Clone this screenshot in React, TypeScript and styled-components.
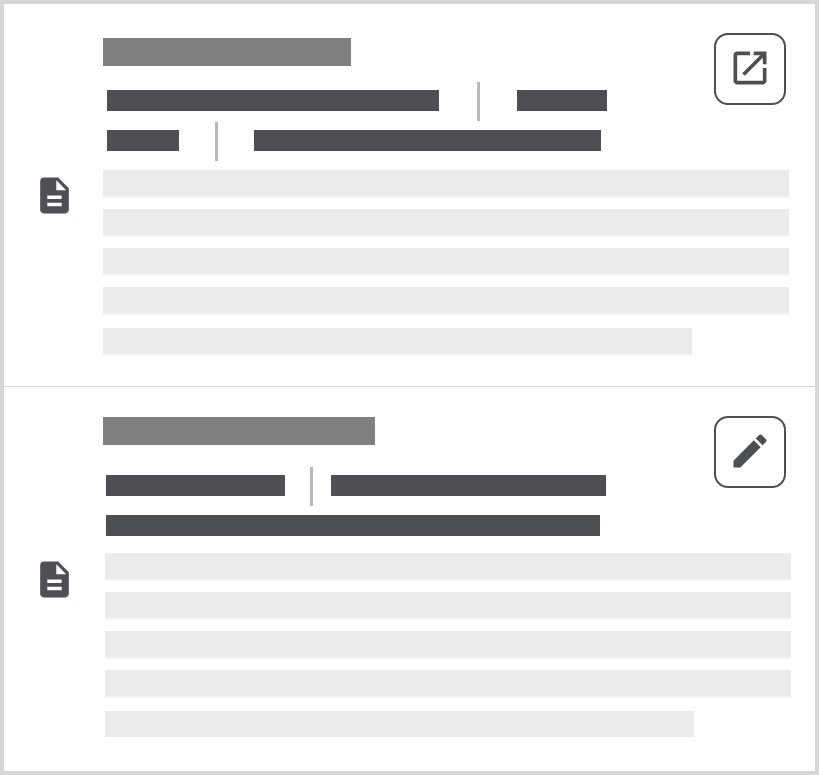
import React from "react";
import styled, { createGlobalStyle } from "styled-components";

const ink = "#4e4f53";
const edge = "#d7d7d7";

const GlobalStyle = createGlobalStyle`
  *, *::before, *::after { box-sizing: border-box; }
  body {
    margin: 0;
    background: #fff;
    font-family: "Liberation Sans", Arial, sans-serif;
  }
`;

const List = styled.main`
  display: grid;
  grid-template-rows: auto 1fr;
  min-height: 100vh;
  border: 4px solid ${edge};
  background: #fff;
`;

const Card = styled.article`
  display: grid;
  grid-template-columns: 43px minmax(0, 1fr);
  column-gap: 27px;
  padding: 0 24px 0 29px;

  & + & {
    border-top: 1px solid ${edge};
  }
`;

const Marker = styled.div`
  display: flex;
  align-items: center;
  color: ${ink};
`;

const Body = styled.div`
  padding: 29px 0 30px;
`;

const Header = styled.header`
  display: flex;
  align-items: flex-start;
  justify-content: space-between;
  gap: 16px;
  padding-right: 5px;
`;

const Summary = styled.div<{ $top: number }>`
  flex: 1;
  min-width: 0;
  padding-top: ${(p) => p.$top}px;
`;

const TitleBar = styled.div<{ $width: number }>`
  width: ${(p) => p.$width}px;
  max-width: 100%;
  height: 28px;
  background: #808080;
`;

const Meta = styled.div<{ $top: number; $indent: number }>`
  padding: ${(p) => p.$top}px 0 0 ${(p) => p.$indent}px;
`;

const MetaRow = styled.div`
  display: flex;
  height: 40px;
`;

const MetaBar = styled.div<{ $width: number }>`
  flex: 0 1 ${(p) => p.$width}px;
  height: 21px;
  margin-top: 8px;
  background: ${ink};
`;

const Rule = styled.div<{ $before: number; $after: number }>`
  flex: none;
  width: 3px;
  height: 39px;
  margin: 0 ${(p) => p.$after}px 0 ${(p) => p.$before}px;
  background: #b8b8b8;
`;

const ActionButton = styled.button`
  display: flex;
  flex: none;
  align-items: center;
  justify-content: center;
  width: 72px;
  height: 72px;
  padding: 0 0 2px;
  border: 2px solid ${ink};
  border-radius: 14px;
  background: #fff;
  color: ${ink};
  cursor: pointer;

  &:hover {
    background: #f3f3f3;
  }
`;

const Lines = styled.div<{ $top: number; $left: number; $right: number }>`
  display: flex;
  flex-direction: column;
  gap: 11px;
  padding: ${(p) => p.$top}px ${(p) => p.$right}px 0 ${(p) => p.$left}px;
`;

const Line = styled.div<{ $plain?: boolean }>`
  height: 28px;
  border-bottom: 2px solid ${(p) => (p.$plain ? "transparent" : "#f4f4f4")};
  background: #ebebeb;
  background-clip: padding-box;

  &:last-child {
    width: 589px;
    max-width: 100%;
    margin-top: 2px;
  }
`;

const Icon = ({ d, size }: { d: string; size: number }) => (
  <svg width={size} height={size} viewBox="0 0 24 24" fill="currentColor" aria-hidden="true">
    <path d={d} />
  </svg>
);

const icons = {
  document:
    "M14 2H6c-1.1 0-1.99.9-1.99 2L4 20c0 1.1.89 2 1.99 2H18c1.1 0 2-.9 2-2V8l-6-6zm2 16H8v-2h8v2zm0-4H8v-2h8v2zm-3-5V3.5L18.5 9H13z",
  open: "M19 19H5V5h7V3H5c-1.11 0-2 .9-2 2v14c0 1.1.89 2 2 2h14c1.1 0 2-.9 2-2v-7h-2v7zM14 3v2h3.59l-9.83 9.83 1.41 1.41L19 6.41V10h2V3h-7z",
  edit: "M3 17.25V21h3.75L17.81 9.94l-3.75-3.75L3 17.25zM20.71 7.04c.39-.39.39-1.02 0-1.41l-2.34-2.34c-.39-.39-1.02-.39-1.41 0l-1.83 1.83 3.75 3.75 1.83-1.83z",
};

type Row = { bars: number[]; before?: number; after?: number };

type Entry = {
  action: "open" | "edit";
  label: string;
  top: number;
  title: number;
  metaTop: number;
  indent: number;
  rows: Row[];
  linesTop: number;
  linesLeft: number;
  linesRight: number;
  plainEnd: boolean;
};

const entries: Entry[] = [
  {
    action: "open",
    label: "Open in new window",
    top: 5,
    title: 248,
    metaTop: 16,
    indent: 4,
    rows: [
      { bars: [332, 90], before: 38, after: 37 },
      { bars: [72, 347], before: 36, after: 36 },
    ],
    linesTop: 8,
    linesLeft: 0,
    linesRight: 2,
    plainEnd: false,
  },
  {
    action: "edit",
    label: "Edit",
    top: 1,
    title: 272,
    metaTop: 22,
    indent: 3,
    rows: [{ bars: [179, 275], before: 25, after: 18 }, { bars: [494] }],
    linesTop: 6,
    linesLeft: 2,
    linesRight: 0,
    plainEnd: true,
  },
];

export default function App() {
  return (
    <>
      <GlobalStyle />
      <List>
        {entries.map((entry) => (
          <Card key={entry.action}>
            <Marker>
              <Icon d={icons.document} size={43} />
            </Marker>
            <Body>
              <Header>
                <Summary $top={entry.top}>
                  <TitleBar $width={entry.title} />
                  <Meta $top={entry.metaTop} $indent={entry.indent}>
                    {entry.rows.map((row, i) => (
                      <MetaRow key={i}>
                        <MetaBar $width={row.bars[0]} />
                        {row.bars.length > 1 && (
                          <>
                            <Rule $before={row.before ?? 0} $after={row.after ?? 0} />
                            <MetaBar $width={row.bars[1]} />
                          </>
                        )}
                      </MetaRow>
                    ))}
                  </Meta>
                </Summary>
                <ActionButton type="button" aria-label={entry.label}>
                  <Icon d={icons[entry.action]} size={44} />
                </ActionButton>
              </Header>
              <Lines $top={entry.linesTop} $left={entry.linesLeft} $right={entry.linesRight}>
                <Line />
                <Line />
                <Line />
                <Line />
                <Line $plain={entry.plainEnd} />
              </Lines>
            </Body>
          </Card>
        ))}
      </List>
    </>
  );
}
